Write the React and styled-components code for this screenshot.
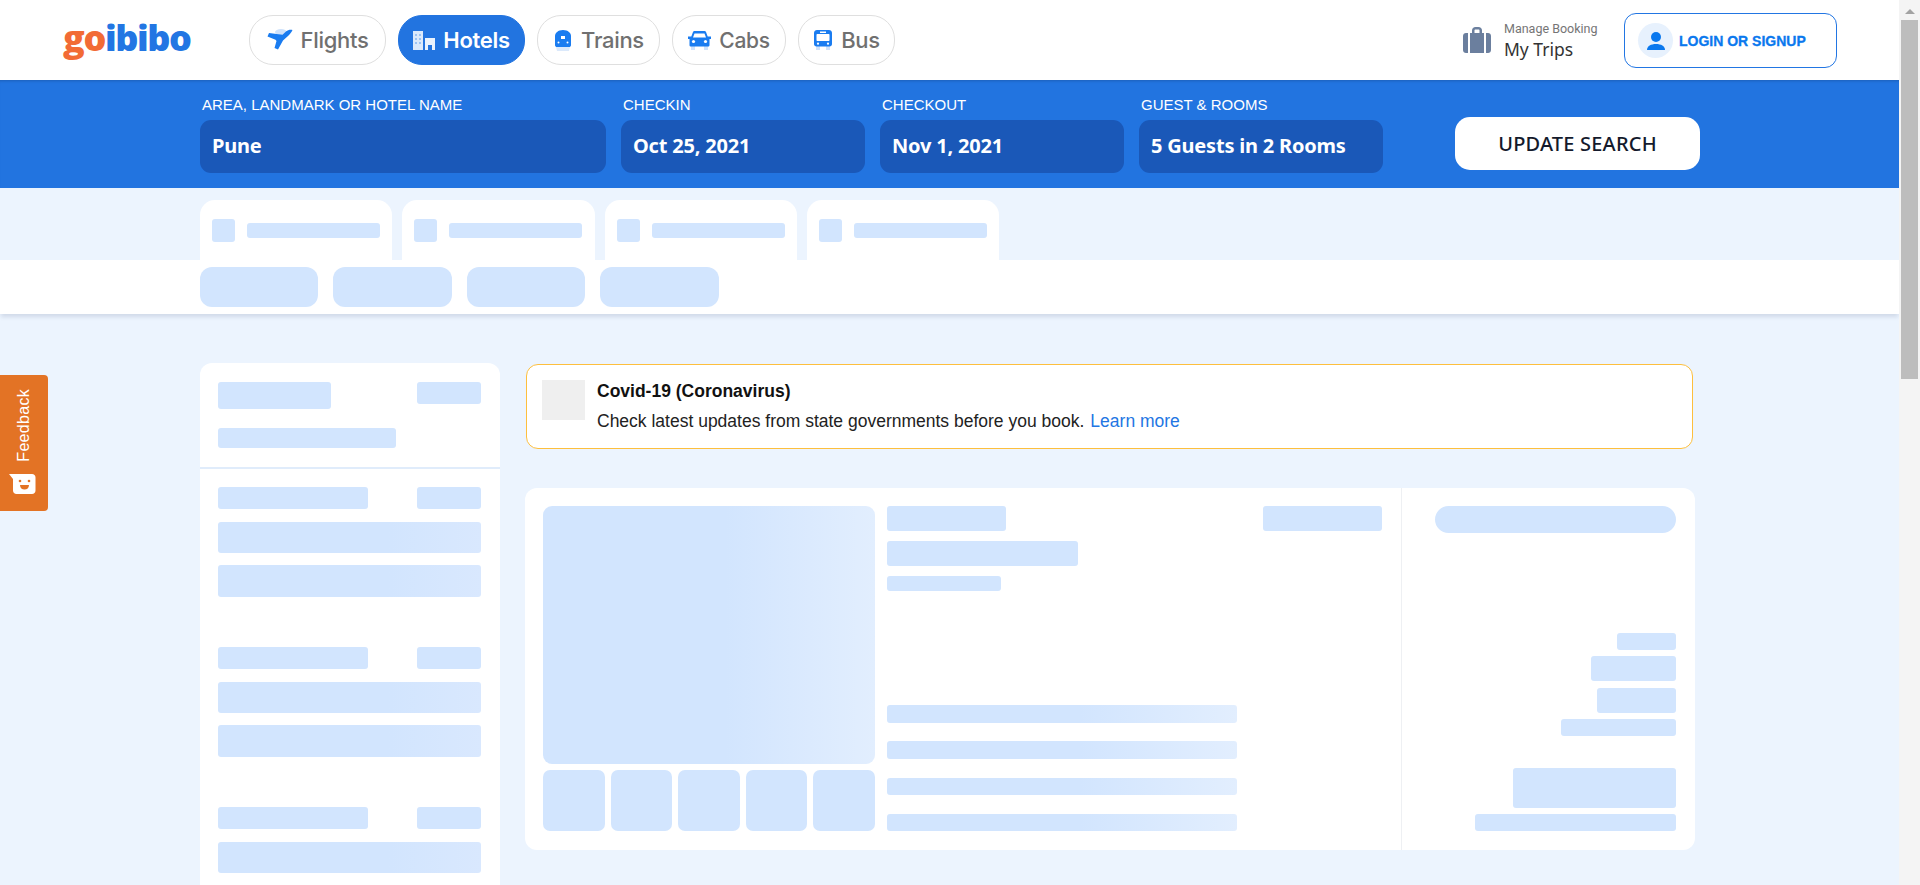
import React from "react";
import styled, { createGlobalStyle, css } from "styled-components";

const GlobalStyle = createGlobalStyle`
  html, body {
    margin: 0;
    padding: 0;
    height: 100%;
    overflow: hidden;
    background: #ecf4fe;
    font-family: "Liberation Sans", Arial, sans-serif;
  }
  * {
    box-sizing: border-box;
  }
`;

const Shell = styled.div`
  display: flex;
  height: 885px;
`;

const Page = styled.div`
  flex: 1;
  min-width: 0;
  height: 885px;
  overflow: hidden;
  background: #ecf4fe;
`;

// fake browser scrollbar, the window itself can't show one here
const Scrollbar = styled.div`
  width: 21px;
  flex: none;
  background: #f4f4f4;
  padding: 6px 2px 0;
`;

const ScrollArrow = styled.div`
  width: 0;
  height: 0;
  margin: 3px auto 6px;
  border-left: 5px solid transparent;
  border-right: 5px solid transparent;
  border-bottom: 5px solid #a3a3a3;
`;

const ScrollThumb = styled.div`
  height: 359px;
  background: #bdbdbd;
`;

const Header = styled.header`
  height: 80px;
  background: #fff;
  display: flex;
  align-items: center;
  padding: 0 62px 0 63px;
`;

const Logo = styled.div`
  width: 186px;
  font-family: "Open Sans", sans-serif;
  font-size: 36px;
  font-weight: 800;
  letter-spacing: -1.4px;
  line-height: 1;
  margin-top: -4px;
  color: #2276e3;
  span {
    color: #f26b35;
  }
`;

const Nav = styled.nav`
  display: flex;
  gap: 12px;
`;

const NavPill = styled.a`
  height: 50px;
  width: ${(p) => p.$w}px;
  display: flex;
  align-items: center;
  justify-content: center;
  gap: 8px;
  border-radius: 24px;
  border: 1px solid ${(p) => (p.$active ? "#2274e0" : "#dfdfdf")};
  background: ${(p) => (p.$active ? "#2274e0" : "#fff")};
  color: ${(p) => (p.$active ? "#fff" : "#707070")};
  font-family: "Inter", sans-serif;
  font-size: ${(p) => p.$fs}px;
  font-weight: ${(p) => (p.$active ? 600 : 500)};
  letter-spacing: -0.3px;
  svg {
    flex: none;
  }
`;

const HeaderRight = styled.div`
  margin-left: auto;
  display: flex;
  align-items: center;
`;

const Trips = styled.div`
  display: flex;
  align-items: center;
  gap: 13px;
  margin-right: 26px;
`;

const TripsText = styled.div`
  display: flex;
  flex-direction: column;
  width: 94px;
`;

const TripsSmall = styled.span`
  font-family: "Roboto", sans-serif;
  font-size: 12.5px;
  line-height: 17px;
  color: #757575;
  white-space: nowrap;
`;

const TripsBig = styled.span`
  font-family: "Noto Sans", sans-serif;
  font-size: 17.5px;
  font-weight: 400;
  line-height: 24px;
  color: #333;
`;

const LoginButton = styled.a`
  width: 213px;
  height: 55px;
  margin-top: 1px;
  border: 1px solid #2276e3;
  border-radius: 12px;
  display: flex;
  align-items: center;
  gap: 6px;
  padding-left: 13px;
  color: #0a78ee;
  font-size: 14px;
  font-weight: 700;
  -webkit-text-stroke: 0.3px #0a78ee;
`;

const Avatar = styled.div`
  width: 35px;
  height: 35px;
  border-radius: 50%;
  background: #e7f1fd;
  display: flex;
  align-items: center;
  justify-content: center;
`;

const SearchBar = styled.section`
  height: 108px;
  background: #2274e0;
  box-shadow: inset 0 3px 3px -2px rgba(0, 0, 0, 0.18);
  display: flex;
  gap: 15px;
  padding-left: 200px;
`;

const FieldWrap = styled.div`
  width: ${(p) => p.$w}px;
  display: flex;
  flex-direction: column;
`;

const FieldLabel = styled.label`
  height: 40px;
  padding: 17px 0 0 2px;
  font-size: 15px;
  line-height: 16px;
  color: #fff;
  white-space: nowrap;
`;

const FieldValue = styled.div`
  height: 53px;
  border-radius: 11px;
  background: #1a58b8;
  display: flex;
  align-items: center;
  padding: 0 0 2px 12px;
  font-family: "Noto Sans", sans-serif;
  font-size: 20px;
  font-weight: 700;
  letter-spacing: -0.2px;
  color: #fff;
`;

const UpdateButton = styled.button`
  width: 245px;
  height: 53px;
  margin: 37px 0 0 57px;
  border: 0;
  border-radius: 15px;
  background: #fff;
  font-family: "Noto Sans", sans-serif;
  font-size: 20px;
  font-weight: 500;
  letter-spacing: 0.2px;
  color: #141a2c;
`;

const TabRow = styled.div`
  display: flex;
  gap: 10px;
  padding: 12px 0 0 200px;
`;

const Tab = styled.div`
  width: 192.33px;
  height: 60px;
  background: #fff;
  border-radius: 15px 15px 0 0;
  display: flex;
  align-items: flex-start;
  gap: 12px;
  padding: 19px 0 0 12px;
`;

const Strip = styled.div`
  height: 54px;
  background: #fff;
  box-shadow: 0 4px 4px -1px rgba(30, 50, 90, 0.13);
  display: flex;
  gap: 15px;
  padding: 7px 0 0 200px;
`;

const Bar = styled.div`
  flex: none;
  width: ${(p) => p.$w || "100%"};
  height: ${(p) => p.$h}px;
  border-radius: ${(p) => p.$r || 3}px;
  margin-top: ${(p) => p.$mt || 0}px;
  background: #d2e5fe;
  ${(p) =>
    p.$fade === "soft" &&
    css`
      background: linear-gradient(90deg, #d2e5fe 65%, #d9e8fe 100%);
    `}
  ${(p) =>
    p.$fade === "strong" &&
    css`
      background: linear-gradient(90deg, #d2e5fe 55%, #e2eefe 100%);
    `}
`;

const Body = styled.div`
  display: flex;
  gap: 25px;
  padding: 49px 0 0 200px;
`;

const Sidebar = styled.aside`
  width: 300px;
  flex: none;
  height: 700px;
  background: #fff;
  border-radius: 12px 12px 0 0;
`;

const SideTop = styled.div`
  padding: 19px 19px 19px 18px;
  border-bottom: 2px solid #e0ecfb;
`;

const SideGroups = styled.div`
  padding: 18px 19px 0 18px;
`;

const SideGroup = styled.div`
  margin-bottom: 50px;
`;

const SplitRow = styled.div`
  display: flex;
  justify-content: space-between;
  align-items: flex-start;
  margin-bottom: ${(p) => p.$mb || 0}px;
`;

const Main = styled.main`
  width: 1170px;
  flex: none;
  padding-top: 1px;
`;

const Notice = styled.div`
  height: 85px;
  margin: 0 2px 0 1px;
  background: #fff;
  border: 1px solid #fdbf3e;
  border-radius: 12px;
  display: flex;
  padding: 15px 0 0 15px;
  gap: 12px;
`;

const NoticeIcon = styled.div`
  width: 43px;
  height: 40px;
  background: #efefef;
`;

const NoticeTitle = styled.div`
  font-size: 17.5px;
  font-weight: 700;
  line-height: 20px;
  margin-top: 1px;
  color: #111;
`;

const NoticeText = styled.div`
  margin-top: 10px;
  font-size: 17.5px;
  line-height: 20px;
  color: #222;
  a {
    margin-left: 6px;
    color: #2276e3;
  }
`;

const ResultCard = styled.div`
  height: 362px;
  margin-top: 39px;
  background: #fff;
  border-radius: 12px;
  display: flex;
`;

const CardLeft = styled.div`
  width: 876px;
  flex: none;
  display: flex;
  gap: 12px;
  padding: 18px 19px 19px 18px;
`;

const Gallery = styled.div`
  width: 332px;
  flex: none;
  display: flex;
  flex-direction: column;
  gap: 6px;
`;

const Thumbs = styled.div`
  display: grid;
  grid-template-columns: repeat(5, 1fr);
  gap: 6px;
`;

const Info = styled.div`
  flex: 1;
  display: flex;
  flex-direction: column;
`;

const InfoLines = styled.div`
  margin-top: auto;
  width: 350px;
`;

const CardRight = styled.div`
  flex: 1;
  border-left: 1px solid #eef0f3;
  padding: 18px 19px 19px;
  display: flex;
  flex-direction: column;
  align-items: flex-end;
`;

const FeedbackTab = styled.div`
  position: fixed;
  left: 0;
  top: 375px;
  width: 48px;
  height: 136px;
  background: #e37325;
  border-radius: 0 4px 4px 0;
  display: flex;
  flex-direction: column;
  align-items: center;
  padding-top: 14px;
  color: #fff;
`;

const FeedbackText = styled.span`
  writing-mode: vertical-rl;
  transform: rotate(180deg);
  font-size: 16px;
  letter-spacing: 0.3px;
  line-height: 18px;
  margin-bottom: 12px;
`;

const FeedbackIcon = styled.div`
  margin-right: 4px;
  line-height: 0;
`;

const PlaneIcon = () => (
  <svg width="26" height="22" viewBox="0 0 26 22">
    <ellipse cx="14" cy="3" rx="6" ry="3" fill="#cfe2fb" />
    <path
      d="M25.500 1c-2.500-.5-4.800.2-6.500 1.500L15.500 5.800 2 4 .5 7.500l8 3.200 1 1.300L7.500 19l3.500 1.500 5-9 5-4.500c1.700-1.600 3.500-3.500 4.500-6z"
      fill="#1a7cf0"
    />
  </svg>
);

const HotelIcon = () => (
  <svg width="22" height="20" viewBox="0 0 22 20">
    <path d="M0 1h10v19H0z" fill="#dbe9fb" />
    <path d="M12 8h10v12h-3v-5h-4v5h-3z" fill="#e9f2fd" />
    <path
      d="M2 4h2v2H2zM6 4h2v2H6zM2 8h2v2H2zM6 8h2v2H6zM2 12h2v2H2zM6 12h2v2H6z"
      fill="#9cc3f3"
    />
  </svg>
);

const TrainIcon = () => (
  <svg width="20" height="23" viewBox="0 0 20 23">
    <path d="M3 18h14l-1 4H4z" fill="#dbe9fb" />
    <path
      d="M2 7c0-3 3-6 8-6s8 3 8 6v9c0 1.500-1 2-2 2H4c-1 0-2-.5-2-2z"
      fill="#1a7cf0"
    />
    <path d="M8 7h4v3H8z" fill="#fff" />
    <circle cx="5.500" cy="13.500" r="1" fill="#fff" />
    <circle cx="14.500" cy="13.500" r="1" fill="#fff" />
  </svg>
);

const CarIcon = () => (
  <svg width="23" height="21" viewBox="0 0 23 21">
    <path d="M3 16h4v4H3zM16 16h4v4h-4z" fill="#cfe2fb" />
    <path
      d="M5 2c.3-.8 1-1 1.800-1h9.400c.8 0 1.500.2 1.800 1l1.700 4.500H23V9h-1.500v6c0 1-.6 1.500-1.500 1.500H3c-.9 0-1.500-.5-1.500-1.500V9H0V6.500h3.300z"
      fill="#1a7cf0"
    />
    <path d="M6.500 3.500h10L18 7.500H5z" fill="#fff" />
    <circle cx="5.500" cy="11.500" r="1.600" fill="#fff" />
    <circle cx="17.500" cy="11.500" r="1.600" fill="#fff" />
  </svg>
);

const BusIcon = () => (
  <svg width="20" height="22" viewBox="0 0 20 22">
    <path d="M3 17h4v4H3zM13 17h4v4h-4z" fill="#cfe2fb" />
    <path
      d="M1 4c0-2 1.500-3 3-3h12c1.500 0 3 1 3 3v11c0 1.500-1 2.500-2.500 2.500h-13C2 17.500 1 16.500 1 15z"
      fill="#1a7cf0"
    />
    <path d="M3.500 6c0-.6.4-1 1-1h11c.6 0 1 .4 1 1v5c0 .6-.4 1-1 1h-11c-.6 0-1-.4-1-1z" fill="#fff" />
    <path d="M7 2.500h6V4H7z" fill="#fff" />
    <circle cx="5" cy="14.700" r="1.100" fill="#fff" />
    <circle cx="15" cy="14.700" r="1.100" fill="#fff" />
  </svg>
);

const BriefcaseIcon = () => (
  <svg width="28" height="26" viewBox="0 0 28 26">
    <path
      d="M9 7V3.500C9 1.500 10.500 0 12.500 0h3C17.500 0 19 1.500 19 3.500V7h-2.500V3.500c0-.6-.4-1-1-1h-3c-.6 0-1 .4-1 1V7z"
      fill="#6b7f9e"
    />
    <path d="M7 6h14v20H7z" fill="#6b7f9e" />
    <path d="M0 9c0-1.700 1.300-3 3-3h2v20H3c-1.700 0-3-1.300-3-3z" fill="#6b7f9e" />
    <path d="M23 6h2c1.700 0 3 1.300 3 3v14c0 1.700-1.300 3-3 3h-2z" fill="#6b7f9e" />
  </svg>
);

const UserIcon = () => (
  <svg width="20" height="20" viewBox="0 0 20 20">
    <circle cx="10" cy="6" r="5" fill="#0a78ee" />
    <path d="M1 19c0-4 4-6 9-6s9 2 9 6z" fill="#0a78ee" />
  </svg>
);

const SmileIcon = () => (
  <svg width="27" height="20" viewBox="0 0 27 20">
    <path
      d="M0 0h23c2 0 3.500 1.500 3.500 3.500v13c0 2-1.500 3.500-3.500 3.500H7.500C5.500 20 4 18.500 4 16.500V5z"
      fill="#fff"
    />
    <circle cx="11" cy="7" r="1.300" fill="#e37325" />
    <circle cx="20" cy="7" r="1.300" fill="#e37325" />
    <path d="M11 11h9c0 3-2 4.500-4.500 4.500S11 14 11 11z" fill="#e37325" />
  </svg>
);

const navItems = [
  { label: "Flights", w: 137, fs: 22, icon: <PlaneIcon /> },
  { label: "Hotels", w: 127, fs: 22, icon: <HotelIcon />, active: true },
  { label: "Trains", w: 123, fs: 22, icon: <TrainIcon /> },
  { label: "Cabs", w: 114, fs: 21, icon: <CarIcon /> },
  { label: "Bus", w: 97, fs: 22, icon: <BusIcon /> },
];

const fields = [
  { label: "AREA, LANDMARK OR HOTEL NAME", value: "Pune", w: 406 },
  { label: "CHECKIN", value: "Oct 25, 2021", w: 244 },
  { label: "CHECKOUT", value: "Nov 1, 2021", w: 244 },
  { label: "GUEST & ROOMS", value: "5 Guests in 2 Rooms", w: 244 },
];

const FilterGroup = () => (
  <SideGroup>
    <SplitRow $mb={13}>
      <Bar $w="150px" $h={22} />
      <Bar $w="64px" $h={22} />
    </SplitRow>
    <Bar $h={31} $fade="soft" />
    <Bar $h={32} $mt={12} $fade="soft" />
  </SideGroup>
);

const App = () => {
  return (
    <Shell>
      <GlobalStyle />
      <Page>
        <Header>
          <Logo>
            <span>go</span>ibibo
          </Logo>
          <Nav>
            {navItems.map((item) => (
              <NavPill key={item.label} $w={item.w} $fs={item.fs} $active={item.active}>
                {item.icon}
                {item.label}
              </NavPill>
            ))}
          </Nav>
          <HeaderRight>
            <Trips>
              <BriefcaseIcon />
              <TripsText>
                <TripsSmall>Manage Booking</TripsSmall>
                <TripsBig>My Trips</TripsBig>
              </TripsText>
            </Trips>
            <LoginButton>
              <Avatar>
                <UserIcon />
              </Avatar>
              LOGIN OR SIGNUP
            </LoginButton>
          </HeaderRight>
        </Header>

        <SearchBar>
          {fields.map((f) => (
            <FieldWrap key={f.label} $w={f.w}>
              <FieldLabel>{f.label}</FieldLabel>
              <FieldValue>{f.value}</FieldValue>
            </FieldWrap>
          ))}
          <UpdateButton>UPDATE SEARCH</UpdateButton>
        </SearchBar>

        <TabRow>
          {[0, 1, 2, 3].map((i) => (
            <Tab key={i}>
              <Bar $w="23px" $h={23} />
              <Bar $w="133px" $h={15} $mt={4} />
            </Tab>
          ))}
        </TabRow>
        <Strip>
          {[0, 1, 2, 3].map((i) => (
            <Bar key={i} $w="118.4px" $h={40} $r={12} />
          ))}
        </Strip>

        <Body>
          <Sidebar>
            <SideTop>
              <SplitRow $mb={19}>
                <Bar $w="113px" $h={27} />
                <Bar $w="64px" $h={22} />
              </SplitRow>
              <Bar $w="178px" $h={20} />
            </SideTop>
            <SideGroups>
              <FilterGroup />
              <FilterGroup />
              <FilterGroup />
            </SideGroups>
          </Sidebar>

          <Main>
            <Notice>
              <NoticeIcon />
              <div>
                <NoticeTitle>Covid-19 (Coronavirus)</NoticeTitle>
                <NoticeText>
                  Check latest updates from state governments before you book.
                  <a>Learn more</a>
                </NoticeText>
              </div>
            </Notice>

            <ResultCard>
              <CardLeft>
                <Gallery>
                  <Bar $h={258} $r={9} $fade="strong" />
                  <Thumbs>
                    {[0, 1, 2, 3, 4].map((i) => (
                      <Bar key={i} $h={61} $r={7} />
                    ))}
                  </Thumbs>
                </Gallery>
                <Info>
                  <SplitRow>
                    <Bar $w="119px" $h={25} />
                    <Bar $w="119px" $h={25} />
                  </SplitRow>
                  <Bar $w="191px" $h={25} $mt={10} />
                  <Bar $w="114px" $h={15} $mt={10} />
                  <InfoLines>
                    <Bar $h={18} $fade="strong" />
                    <Bar $h={18} $mt={18} $fade="strong" />
                    <Bar $h={17} $mt={19} $fade="strong" />
                    <Bar $h={17} $mt={19} $fade="strong" />
                  </InfoLines>
                </Info>
              </CardLeft>
              <CardRight>
                <Bar $w="241px" $h={27} $r={14} />
                <Bar $w="59px" $h={17} $mt={100} />
                <Bar $w="85px" $h={25} $mt={6} />
                <Bar $w="79px" $h={25} $mt={7} />
                <Bar $w="115px" $h={17} $mt={6} />
                <Bar $w="163px" $h={40} $mt={32} />
                <Bar $w="201px" $h={17} $mt={6} />
              </CardRight>
            </ResultCard>
          </Main>
        </Body>
      </Page>

      <Scrollbar>
        <ScrollArrow />
        <ScrollThumb />
      </Scrollbar>

      <FeedbackTab>
        <FeedbackText>Feedback</FeedbackText>
        <FeedbackIcon>
          <SmileIcon />
        </FeedbackIcon>
      </FeedbackTab>
    </Shell>
  );
};

export default App;
